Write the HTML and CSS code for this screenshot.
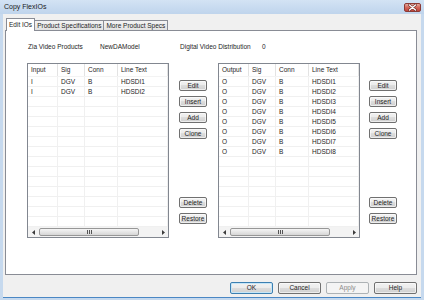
FILE: index.html
```html
<!DOCTYPE html>
<html>
<head>
<meta charset="utf-8">
<link rel="stylesheet" href="styles.css">
</head>
<body>
<div class="window">
  <div class="titlebar">
    <span class="title">Copy FlexIOs</span>
    <span class="close"><svg width="9" height="7" viewBox="0 0 9 7"><path d="M1.5 1 L7.5 6 M7.5 1 L1.5 6" stroke="#6a2a26" stroke-width="2.6" stroke-linecap="round"/><path d="M1.5 1 L7.5 6 M7.5 1 L1.5 6" stroke="#ffffff" stroke-width="1.4" stroke-linecap="round"/></svg></span>
  </div>
  <div class="client">
    <div class="tabs">
      <div class="tab active">Edit IOs</div>
      <div class="tab">Product Specifications</div>
      <div class="tab">More Product Specs</div>
    </div>
    <div class="panel">
      <div class="info">
        <span>Zia Video Products</span>
        <span>NewDAModel</span>
        <span>Digital Video Distribution</span>
        <span>0</span>
      </div>
      <div class="lists">
        <div class="list">
          <div class="row head"><span>Input</span><span>Sig</span><span>Conn</span><span>Line Text</span></div>
          <div class="rows">
            <div class="row"><span>I</span><span>DGV</span><span>B</span><span>HDSDI1</span></div>
            <div class="row"><span>I</span><span>DGV</span><span>B</span><span>HDSDI2</span></div>
            <div class="row"><span></span><span></span><span></span><span></span></div>
            <div class="row"><span></span><span></span><span></span><span></span></div>
            <div class="row"><span></span><span></span><span></span><span></span></div>
            <div class="row"><span></span><span></span><span></span><span></span></div>
            <div class="row"><span></span><span></span><span></span><span></span></div>
            <div class="row"><span></span><span></span><span></span><span></span></div>
            <div class="row"><span></span><span></span><span></span><span></span></div>
            <div class="row"><span></span><span></span><span></span><span></span></div>
            <div class="row"><span></span><span></span><span></span><span></span></div>
            <div class="row"><span></span><span></span><span></span><span></span></div>
            <div class="row"><span></span><span></span><span></span><span></span></div>
            <div class="row"><span></span><span></span><span></span><span></span></div>
            <div class="row"><span></span><span></span><span></span><span></span></div>
          </div>
          <div class="hscroll">
            <span class="arrow"><svg width="3" height="5" viewBox="0 0 3 5"><polygon points="3,0 0,2.5 3,5" fill="#3c3c3c"/></svg></span>
            <span class="thumb"><svg width="5" height="4" viewBox="0 0 5 4"><path d="M0.5 0 V4 M2.5 0 V4 M4.5 0 V4" stroke="#555" stroke-width="1"/></svg></span>
            <span class="track"></span>
            <span class="arrow"><svg width="3" height="5" viewBox="0 0 3 5"><polygon points="0,0 3,2.5 0,5" fill="#3c3c3c"/></svg></span>
          </div>
        </div>
        <div class="btncol">
          <button class="btn">Edit</button>
          <button class="btn">Insert</button>
          <button class="btn">Add</button>
          <button class="btn">Clone</button>
          <button class="btn push">Delete</button>
          <button class="btn">Restore</button>
        </div>
        <div class="list">
          <div class="row head"><span>Output</span><span>Sig</span><span>Conn</span><span>Line Text</span></div>
          <div class="rows">
            <div class="row"><span>O</span><span>DGV</span><span>B</span><span>HDSDI1</span></div>
            <div class="row"><span>O</span><span>DGV</span><span>B</span><span>HDSDI2</span></div>
            <div class="row"><span>O</span><span>DGV</span><span>B</span><span>HDSDI3</span></div>
            <div class="row"><span>O</span><span>DGV</span><span>B</span><span>HDSDI4</span></div>
            <div class="row"><span>O</span><span>DGV</span><span>B</span><span>HDSDI5</span></div>
            <div class="row"><span>O</span><span>DGV</span><span>B</span><span>HDSDI6</span></div>
            <div class="row"><span>O</span><span>DGV</span><span>B</span><span>HDSDI7</span></div>
            <div class="row"><span>O</span><span>DGV</span><span>B</span><span>HDSDI8</span></div>
            <div class="row"><span></span><span></span><span></span><span></span></div>
            <div class="row"><span></span><span></span><span></span><span></span></div>
            <div class="row"><span></span><span></span><span></span><span></span></div>
            <div class="row"><span></span><span></span><span></span><span></span></div>
            <div class="row"><span></span><span></span><span></span><span></span></div>
            <div class="row"><span></span><span></span><span></span><span></span></div>
            <div class="row"><span></span><span></span><span></span><span></span></div>
          </div>
          <div class="hscroll">
            <span class="arrow"><svg width="3" height="5" viewBox="0 0 3 5"><polygon points="3,0 0,2.5 3,5" fill="#3c3c3c"/></svg></span>
            <span class="thumb"><svg width="5" height="4" viewBox="0 0 5 4"><path d="M0.5 0 V4 M2.5 0 V4 M4.5 0 V4" stroke="#555" stroke-width="1"/></svg></span>
            <span class="track"></span>
            <span class="arrow"><svg width="3" height="5" viewBox="0 0 3 5"><polygon points="0,0 3,2.5 0,5" fill="#3c3c3c"/></svg></span>
          </div>
        </div>
        <div class="btncol right">
          <button class="btn">Edit</button>
          <button class="btn">Insert</button>
          <button class="btn">Add</button>
          <button class="btn">Clone</button>
          <button class="btn push">Delete</button>
          <button class="btn">Restore</button>
        </div>
      </div>
    </div>
    <div class="footer">
      <button class="btn big default">OK</button>
      <button class="btn big">Cancel</button>
      <button class="btn big disabled">Apply</button>
      <button class="btn big">Help</button>
    </div>
  </div>
</div>
</body>
</html>
```
FILE: styles.css
```css
* { box-sizing: border-box; margin: 0; padding: 0; }
html, body { width: 424px; height: 300px; overflow: hidden; }
body {
  font-family: "Liberation Sans", Arial, sans-serif;
  font-size: 6.5px;
  color: #1e1e1e;
  background: #c6d9ee;
}
.window {
  width: 424px;
  height: 300px;
  display: flex;
  flex-direction: column;
  background: #c6d9ee;
  padding-bottom: 2px;
}
.titlebar {
  height: 14px;
  flex: none;
  display: flex;
  align-items: flex-start;
  justify-content: space-between;
  padding: 0 3px 0 4px;
  background: linear-gradient(#d3e3f4, #bfd4ec);
}
.title { font-size: 7px; line-height: 13px; color: #1a1a1a; }
.close {
  width: 17px;
  height: 9px;
  margin-top: 3px;
  border: 1px solid #8c3b36;
  border-radius: 2px;
  background: linear-gradient(#e6a99d, #d2675a 50%, #c2443a);
  display: flex;
  align-items: center;
  justify-content: center;
}
.client {
  flex: 1;
  margin: 0 3px;
  background: #f0f0f0;
  border-bottom: 1px solid #4a87c4;
  display: flex;
  flex-direction: column;
}
.tabs {
  display: flex;
  align-items: flex-end;
  height: 17px;
  flex: none;
  padding-left: 3px;
  margin-bottom: -1px;
  position: relative;
  z-index: 1;
}
.tab {
  height: 10px;
  line-height: 9px;
  margin-bottom: 1px;
  padding: 0 2px;
  border-top: 1px solid #898c95;
  border-right: 1px solid #898c95;
  background: linear-gradient(#f3f3f3, #e2e2e2);
  white-space: nowrap;
}
.tab.active {
  height: 13px;
  line-height: 11px;
  margin-bottom: 0;
  border-left: 1px solid #898c95;
  background: #fff;
}
.panel {
  flex: 1;
  margin: 0 4px 0 2px;
  background: #fff;
  border: 1px solid #898c95;
  padding: 11px 0 0 21px;
}
.info {
  display: grid;
  grid-template-columns: 72px 80px 82px auto;
  line-height: 10px;
  padding-left: 1px;
}
.lists {
  margin-top: 11px;
  display: flex;
  height: 175px;
}
.list {
  width: 142px;
  height: 175px;
  border: 1px solid #828790;
  display: flex;
  flex-direction: column;
  background: #fff;
}
.row {
  display: grid;
  grid-template-columns: 30px 27px 33px 1fr;
  height: 10px;
  line-height: 9px;
  border-bottom: 1px solid #f0f0f0;
}
.row span {
  padding-left: 3px;
  border-right: 1px solid #f0f0f0;
  white-space: nowrap;
  overflow: hidden;
}
.row.head {
  height: 13px;
  line-height: 12px;
  flex: none;
  border-bottom: 1px solid #f3f3f3;
}
.row.head span { border-right-color: #e3e3e3; }
.rows { flex: 1; overflow: hidden; }
.hscroll {
  height: 10px;
  flex: none;
  display: flex;
  align-items: center;
  background: #f3f3f3;
}
.arrow {
  width: 10px;
  height: 10px;
  display: flex;
  align-items: center;
  justify-content: center;
}
.thumb {
  width: 100px;
  height: 8px;
  margin-left: 1px;
  border: 1px solid #979797;
  border-radius: 2px;
  background: linear-gradient(#f5f5f5, #e6e6e6 50%, #d6d6d6);
  display: flex;
  align-items: center;
  justify-content: center;
}
.track { flex: 1; }
.btncol {
  width: 28px;
  margin: 0 11px 0 10px;
  display: flex;
  flex-direction: column;
  gap: 5px;
  padding: 17px 0 14px;
}
.btncol.right { margin: 0 0 0 9px; }
.push { margin-top: auto; }
.btn {
  font-family: "Liberation Sans", Arial, sans-serif;
  font-size: 6.5px;
  color: #1e1e1e;
  height: 11px;
  width: 100%;
  line-height: 9px;
  border: 1px solid #707070;
  border-radius: 2px;
  background: linear-gradient(#f2f2f2, #ebebeb 50%, #dddddd 50%, #cfcfcf);
  box-shadow: inset 0 0 0 1px rgba(255,255,255,0.6);
  text-align: center;
  padding: 0;
}
.footer {
  height: 22px;
  flex: none;
  display: flex;
  justify-content: flex-end;
  gap: 5px;
  padding: 7px 4px 0 0;
}
.btn.big { width: 43px; height: 12px; line-height: 10px; }
.btn.default {
  border-color: #3c7fb1;
  box-shadow: inset 0 0 0 1px #c6e6f8;
}
.btn.disabled {
  border-color: #adb2b5;
  background: #f4f4f4;
  color: #8a8a8a;
  box-shadow: none;
}
```
